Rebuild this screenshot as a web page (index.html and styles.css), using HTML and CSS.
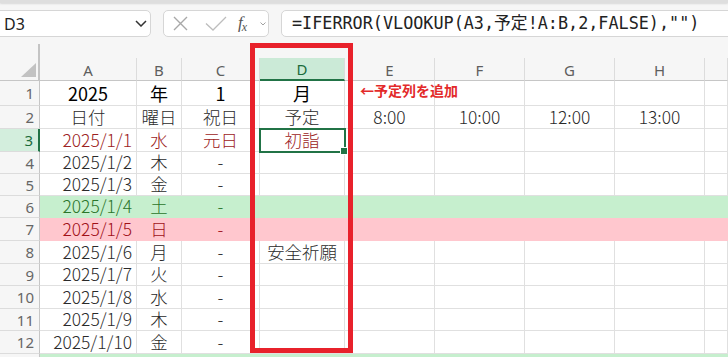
FILE: index.html
```html
<!DOCTYPE html>
<html lang="ja">
<head>
<meta charset="utf-8">
<title>Excel</title>
<link rel="stylesheet" href="styles.css">
</head>
<body>
<div class="app">
  <div class="topstrip"></div>
  <div class="formula-bar">
    <div class="namebox">
      <span>D3</span>
      <svg class="chev" width="12" height="7" viewBox="0 0 12 7"><path d="M1 1 L6 6 L11 1" fill="none" stroke="#333" stroke-width="1.5"/></svg>
    </div>
    <div class="fxbox">
      <svg class="ic-x" width="15" height="15" viewBox="0 0 15 15"><path d="M1 1 L14 14 M14 1 L1 14" fill="none" stroke="#a8a8a8" stroke-width="1.4"/></svg>
      <svg class="ic-ok" width="22" height="15" viewBox="0 0 22 15"><path d="M1 7.5 L8 14 L21 1" fill="none" stroke="#bdbdbd" stroke-width="1.3"/></svg>
      <span class="fx">f<sub>x</sub></span>
      <svg class="chev-s" width="6" height="4" viewBox="0 0 6 4"><path d="M0.5 0.5 L3 3 L5.5 0.5" fill="none" stroke="#a0a0a0" stroke-width="1"/></svg>
    </div>
    <div class="formula">=IFERROR(VLOOKUP(A3,予定!A:B,2,FALSE),"")</div>
  </div>

  <div class="sheet">
    <div class="corner"></div>
    <div class="ch">A</div><div class="ch">B</div><div class="ch">C</div><div class="ch ch-sel">D</div><div class="ch">E</div><div class="ch">F</div><div class="ch">G</div><div class="ch">H</div><div class="ch"></div>

    <div class="rh">1</div>
    <div class="c t1">2025</div><div class="c t1">年</div><div class="c t1">1</div><div class="c t1">月</div><div class="c"></div><div class="c"></div><div class="c"></div><div class="c"></div><div class="c"></div>

    <div class="rh">2</div>
    <div class="c">日付</div><div class="c">曜日</div><div class="c">祝日</div><div class="c">予定</div><div class="c">8:00</div><div class="c">10:00</div><div class="c">12:00</div><div class="c">13:00</div><div class="c"></div>

    <div class="rh rh-sel">3</div>
    <div class="c r red">2025/1/1</div><div class="c red">水</div><div class="c red">元日</div><div class="c red sel">初詣</div><div class="c"></div><div class="c"></div><div class="c"></div><div class="c"></div><div class="c"></div>

    <div class="rh">4</div>
    <div class="c r">2025/1/2</div><div class="c">木</div><div class="c">-</div><div class="c"></div><div class="c"></div><div class="c"></div><div class="c"></div><div class="c"></div><div class="c"></div>

    <div class="rh">5</div>
    <div class="c r">2025/1/3</div><div class="c">金</div><div class="c">-</div><div class="c"></div><div class="c"></div><div class="c"></div><div class="c"></div><div class="c"></div><div class="c"></div>

    <div class="rh">6</div>
    <div class="c r fg">2025/1/4</div><div class="c fg">土</div><div class="c fg">-</div><div class="c fg"></div><div class="c fg"></div><div class="c fg"></div><div class="c fg"></div><div class="c fg"></div><div class="c fg"></div>

    <div class="rh">7</div>
    <div class="c r fr">2025/1/5</div><div class="c fr">日</div><div class="c fr">-</div><div class="c fr"></div><div class="c fr"></div><div class="c fr"></div><div class="c fr"></div><div class="c fr"></div><div class="c fr"></div>

    <div class="rh">8</div>
    <div class="c r">2025/1/6</div><div class="c">月</div><div class="c">-</div><div class="c">安全祈願</div><div class="c"></div><div class="c"></div><div class="c"></div><div class="c"></div><div class="c"></div>

    <div class="rh">9</div>
    <div class="c r">2025/1/7</div><div class="c">火</div><div class="c">-</div><div class="c"></div><div class="c"></div><div class="c"></div><div class="c"></div><div class="c"></div><div class="c"></div>

    <div class="rh">10</div>
    <div class="c r">2025/1/8</div><div class="c">水</div><div class="c">-</div><div class="c"></div><div class="c"></div><div class="c"></div><div class="c"></div><div class="c"></div><div class="c"></div>

    <div class="rh">11</div>
    <div class="c r">2025/1/9</div><div class="c">木</div><div class="c">-</div><div class="c"></div><div class="c"></div><div class="c"></div><div class="c"></div><div class="c"></div><div class="c"></div>

    <div class="rh">12</div>
    <div class="c r">2025/1/10</div><div class="c">金</div><div class="c">-</div><div class="c"></div><div class="c"></div><div class="c"></div><div class="c"></div><div class="c"></div><div class="c"></div>

    <div class="rh"></div>
    <div class="c fg"></div><div class="c fg"></div><div class="c fg"></div><div class="c fg"></div><div class="c fg"></div><div class="c fg"></div><div class="c fg"></div><div class="c fg"></div><div class="c fg"></div>
  </div>

  <div class="redbox"></div>
  <div class="note">←予定列を追加</div>
</div>
</body>
</html>
```

FILE: styles.css
```css
* { box-sizing: border-box; }
html, body { margin: 0; padding: 0; }
body {
  width: 728px;
  height: 357px;
  overflow: hidden;
  background: #f6f6f6;
  font-family: "Noto Sans CJK JP", "Noto Sans", sans-serif;
}
.app {
  position: relative;
  width: 728px;
  height: 357px;
  overflow: hidden;
}
.topstrip {
  height: 3px;
  background: #dedede;
  box-shadow: 0 1px 2px rgba(0, 0, 0, 0.12);
}
.formula-bar {
  display: flex;
  height: 27px;
  margin: 7px 0 21px;
}
.namebox {
  width: 157px;
  margin-left: -6px;
  background: #fff;
  border: 1px solid #d6d6d6;
  border-radius: 5px;
  display: flex;
  align-items: center;
  justify-content: space-between;
  padding: 0 3px 0 9px;
  font-family: "Noto Sans", sans-serif;
  font-size: 16px;
  color: #222;
}
.chev { display: block; }
.fxbox {
  width: 106px;
  margin-left: 12px;
  background: #fff;
  border: 1px solid #d6d6d6;
  border-radius: 5px;
  display: flex;
  align-items: center;
  padding-left: 9px;
}
.ic-x { display: block; }
.ic-ok { display: block; margin-left: 17px; }
.fx {
  margin-left: 11px;
  width: 12px;
  font-family: "Liberation Serif", serif;
  font-style: italic;
  font-size: 17px;
  line-height: 1;
  color: #555;
  position: relative;
  top: -1px;
}
.fx sub {
  font-size: 12px;
  vertical-align: baseline;
  position: relative;
  top: 3px;
  margin-left: -1px;
}
.chev-s { display: block; margin-left: 10px; }
.formula {
  flex: 1;
  margin-left: 12px;
  margin-right: -10px;
  background: #fff;
  border: 1px solid #d6d6d6;
  border-radius: 5px;
  padding-left: 10px;
  display: flex;
  align-items: center;
  font-family: "DejaVu Sans Mono", "Noto Sans CJK JP", monospace;
  font-size: 16.8px;
  line-height: 1.2;
  color: #222;
  white-space: nowrap;
}

.sheet {
  display: grid;
  grid-template-columns: 40px 97px 45px 78px 85px 90px 90px 90px 90px 23px;
  grid-template-rows: 23px 25px 23px 23px 22px 22px 22px 23px 23px 22px 23px 22px 23px 23px;
}
.corner {
  background: #f6f6f6;
  border-right: 2px solid #c4c4c4;
  border-bottom: 1px solid #c6c6c6;
  position: relative;
}
.corner::before {
  content: "";
  position: absolute;
  right: -2px;
  top: -14px;
  width: 2px;
  height: 14px;
  background: #c4c4c4;
}
.corner::after {
  content: "";
  position: absolute;
  right: 2px;
  bottom: 3px;
  width: 0;
  height: 0;
  border-left: 15px solid transparent;
  border-bottom: 14px solid #c2c2c2;
}
.ch {
  background: #f6f6f6;
  border-right: 1px solid #dcdcdc;
  border-bottom: 1px solid #c6c6c6;
  display: flex;
  align-items: center;
  justify-content: center;
  font-family: "Noto Sans", sans-serif;
  font-size: 15px;
  line-height: 1.2;
  color: #5e5e5e;
  padding-top: 1px;
}
.ch-sel {
  background: #cbead7;
  color: #1b6b3b;
  border-bottom: 2px solid #217346;
}
.rh {
  background: #f6f6f6;
  border-right: 1px solid #c6c6c6;
  border-bottom: 1px solid #dcdcdc;
  display: flex;
  align-items: center;
  justify-content: flex-end;
  padding-right: 5px;
  font-family: "Noto Sans", sans-serif;
  font-size: 15px;
  line-height: 1.2;
  color: #666;
}
.rh-sel {
  background: #d3eedd;
  color: #1b6b3b;
  border-right: 2px solid #217346;
}
.c {
  background: #fff;
  border-right: 1px solid #e0e0e0;
  border-bottom: 1px solid #e0e0e0;
  display: flex;
  align-items: center;
  justify-content: center;
  padding: 0 4px;
  font-size: 17.4px;
  line-height: 1.15;
  font-weight: 300;
  color: #2a2a2a;
  white-space: nowrap;
  overflow: visible;
}
.r { justify-content: flex-end; }
.t1 {
  font-size: 18px;
  font-weight: 400;
  color: #000;
}
.red { color: #9c2222; }
.fg {
  background: #c6efce;
  border-color: #c6efce;
  color: #2a752a;
}
.fr {
  background: #ffc7ce;
  border-color: #ffc7ce;
  color: #a01018;
}
.sel {
  position: relative;
  outline: 2px solid #217346;
  outline-offset: -1px;
}
.sel::after {
  content: "";
  position: absolute;
  right: -4px;
  bottom: -4px;
  width: 6px;
  height: 6px;
  background: #217346;
  border: 1px solid #fff;
}
.redbox {
  position: absolute;
  left: 250px;
  top: 43px;
  width: 103px;
  height: 310px;
  border: 5px solid #e8212b;
}
.note {
  position: absolute;
  left: 360px;
  top: 81px;
  font-size: 14px;
  font-weight: 700;
  line-height: 18px;
  color: #e32a2a;
  white-space: nowrap;
}
```
